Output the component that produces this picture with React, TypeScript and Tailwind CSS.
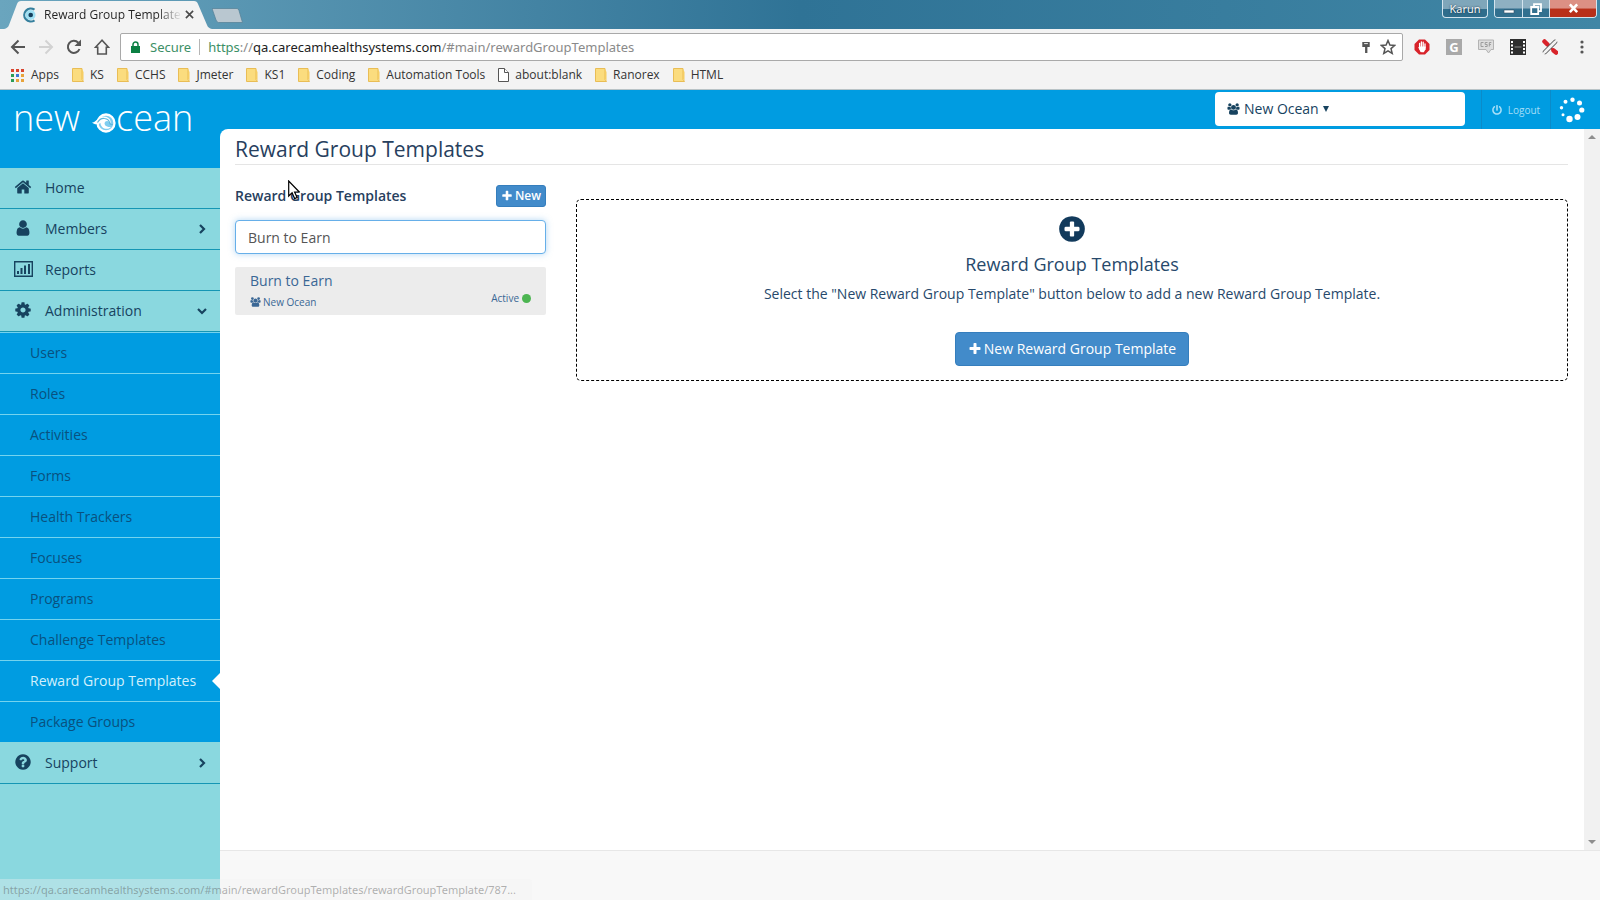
import React from 'react';
import { FaPowerOff } from 'react-icons/fa';

const FA = {
  home: 'M1472 992v480q0 26-19 45t-45 19h-384v-384h-256v384h-384q-26 0-45-19t-19-45v-480q0-1 .5-3t.5-3l575-474 575 474q1 2 1 6zm223-69l-62 74q-8 9-21 11h-3q-13 0-21-7l-692-577-692 577q-12 8-24 7-13-2-21-11l-62-74q-8-10-7-23.5t11-21.5l719-599q32-26 76-26t76 26l244 204v-195q0-14 9-23t23-9h192q14 0 23 9t9 23v408l219 182q10 8 11 21.5t-7 23.5z',
  user: 'M1536 1399q0 109-62.5 187t-150.5 78h-854q-88 0-150.5-78t-62.5-187q0-85 8.5-160.5t31.5-152 58.5-131 94-89 134.5-34.5q131 128 313 128t313-128q76 0 134.5 34.5t94 89 58.5 131 31.5 152 8.5 160.5zm-256-887q0 159-112.5 271.5t-271.5 112.5-271.5-112.5-112.5-271.5 112.5-271.5 271.5-112.5 271.5 112.5 112.5 271.5z',
  cog: 'M1152 896q0-106-75-181t-181-75-181 75-75 181 75 181 181 75 181-75 75-181zm512-109v222q0 12-8 23t-20 13l-185 28q-19 54-39 91 35 50 107 138 10 12 10 25t-9 23q-27 37-99 108t-94 71q-12 0-26-9l-138-108q-44 23-91 38-16 136-29 186-7 28-36 28h-222q-14 0-24.5-8.5t-11.5-21.5l-28-184q-49-16-90-37l-141 107q-10 9-25 9-14 0-25-11-126-114-165-168-7-10-7-23 0-12 8-23 15-21 51-66.5t54-70.5q-27-50-41-99l-183-27q-13-2-21-12.5t-8-23.5v-222q0-12 8-23t19-13l186-28q14-46 39-92-40-57-107-138-10-12-10-24 0-10 9-23 26-36 98.5-107.5t94.5-71.5q13 0 26 10l138 107q44-23 91-38 16-136 29-186 7-28 36-28h222q14 0 24.5 8.5t11.5 21.5l28 184q49 16 90 37l142-107q9-9 24-9 13 0 25 10 129 119 165 170 7 8 7 22 0 12-8 23-15 21-51 66.5t-54 70.5q26 50 41 98l183 28q13 2 21 12.5t8 23.5z',
  question: 'M1024 1376v-192q0-14-9-23t-23-9h-192q-14 0-23 9t-9 23v192q0 14 9 23t23 9h192q14 0 23-9t9-23zm256-672q0-88-55.5-163t-138.5-116-170-41q-243 0-371 213-15 24 8 42l132 100q7 6 19 6 16 0 25-12 53-68 86-92 34-24 86-24 48 0 85.5 26t37.5 59q0 38-20 61t-68 45q-63 28-115.5 86.5t-52.5 125.5v36q0 14 9 23t23 9h192q14 0 23-9t9-23q0-19 21.5-49.5t54.5-49.5q32-18 49-28.5t46-35 44.5-48 28-60.5 12.5-81zm384 192q0 209-103 385.5t-279.5 279.5-385.5 103-385.5-103-279.5-279.5-103-385.5 103-385.5 279.5-279.5 385.5-103 385.5 103 279.5 279.5 103 385.5z',
  plus: 'M1600 736v192q0 40-28 68t-68 28h-416v416q0 40-28 68t-68 28h-192q-40 0-68-28t-28-68v-416h-416q-40 0-68-28t-28-68v-192q0-40 28-68t68-28h416v-416q0-40 28-68t68-28h192q40 0 68 28t28 68v416h416q40 0 68 28t28 68z',
  plusCircle: 'M1344 960v-128q0-26-19-45t-45-19h-256v-256q0-26-19-45t-45-19h-128q-26 0-45 19t-19 45v256h-256q-26 0-45 19t-19 45v128q0 26 19 45t45 19h256v256q0 26 19 45t45 19h128q26 0 45-19t19-45v-256h256q26 0 45-19t19-45zm320-64q0 209-103 385.5t-279.5 279.5-385.5 103-385.5-103-279.5-279.5-103-385.5 103-385.5 279.5-279.5 385.5-103 385.5 103 279.5 279.5 103 385.5z',
  users: 'M657 896q-162 5-265 128h-134q-82 0-138-40.5t-56-118.5q0-353 124-353 6 0 43.5 21t97.5 42.5 119 21.5q67 0 133-23-5 37-5 66 0 139 81 256zm1071 637q0 120-73 189.5t-194 69.5h-874q-121 0-194-69.5t-73-189.5q0-53 3.5-103.5t14-109 26.5-108.5 43-97.5 62-81 85.5-53.5 111.5-20q10 0 43 21.5t73 48 107 48 135 21.5 135-21.5 107-48 73-48 43-21.5q61 0 111.5 20t85.5 53.5 62 81 43 97.5 26.5 108.5 14 109 3.5 103.5zm-1024-1277q0 106-75 181t-181 75-181-75-75-181 75-181 181-75 181 75 75 181zm704 384q0 159-112.5 271.5t-271.5 112.5-271.5-112.5-112.5-271.5 112.5-271.5 271.5-112.5 271.5 112.5 112.5 271.5zm576 225q0 78-56 118.5t-138 40.5h-134q-103-123-265-128 81-117 81-256 0-29-5-66 66 23 133 23 59 0 119-21.5t97.5-42.5 43.5-21q124 0 124 353zm-128-609q0 106-75 181t-181 75-181-75-75-181 75-181 181-75 181 75 75 181z',
};

function Glyph({ name, className }: { name: keyof typeof FA; className: string }) {
  return (
    <svg viewBox={name === 'users' ? '0 0 2048 1792' : '0 0 1792 1792'} className={className} fill="currentColor" aria-hidden="true">
      <path d={FA[name]} />
    </svg>
  );
}

function TitleBar() {
  return (
    <div className="flex h-[29px] items-start justify-between bg-linear-to-r from-[#6aa5be] via-[#2f7396] to-[#4086a5]">
      <div className="flex h-full items-start">
        <div className="relative flex h-full w-[212px] items-center">
          <svg viewBox="0 0 212 29" className="absolute inset-0 h-full w-full" aria-hidden="true">
            <path d="M4 29 Q8 28 9 25 L17 4 Q18 1 21 1 H194 Q197 1 198 4 L207 25 Q208 28 212 29 Z" fill="#f3f3f3" />
          </svg>
          <div className="relative flex w-full items-center pl-[22px]">
            <svg viewBox="0 0 16 16" className="size-4 shrink-0" aria-hidden="true">
              <circle cx="8.500" cy="8" r="5" fill="#9fe0f3" />
              <path d="M12.500 2.700 A6.500 6.500 0 1 0 12.500 13.300" fill="none" stroke="#347f9d" strokeWidth="2.2" />
              <circle cx="8.700" cy="8" r="2.300" fill="#153f5c" />
            </svg>
            <span className="ml-[6px] bg-linear-to-r from-[#222] from-80% to-transparent to-97% bg-clip-text text-[12px] leading-4 whitespace-nowrap text-transparent">
              Reward Group Templates
            </span>
            <button aria-label="Close tab" className="absolute left-[185px]">
              <svg viewBox="0 0 10 10" className="size-[9px]" stroke="#4a4a4a" strokeWidth="1.8" aria-hidden="true">
                <path d="M1 1l8 8M9 1L1 9" />
              </svg>
            </button>
          </div>
        </div>
        <button aria-label="New tab" className="mt-2">
          <svg viewBox="0 0 32 15" className="h-[15px] w-8" aria-hidden="true">
            <path d="M0 0.500 H25 Q26.500 0.500 27 2.500 L30.500 14.500 H6.500 Q5 14.500 4 12 Z" fill="#b9c7d0" stroke="#58849b" strokeWidth="0.8" />
          </svg>
        </button>
      </div>
      <div className="flex items-start gap-[6px] pr-[3px]">
        <button className="h-[18px] w-[46px] rounded-b-[4px] border border-t-0 border-[#d3e4ee] bg-linear-to-b from-[#7fa6ba] from-50% to-[#2f6d8c] to-55% text-[11px] leading-4 text-white [text-shadow:0_0_2px_#123]">
          Karun
        </button>
        <div className="flex h-[18px] overflow-hidden rounded-b-[4px] border border-t-0 border-[#d3e4ee]">
          <button aria-label="Minimize" className="flex w-7 items-center justify-center border-r border-[#d3e4ee] bg-linear-to-b from-[#8eb0c2] from-45% to-[#32708f] to-55%">
            <svg viewBox="0 0 12 12" className="size-3" aria-hidden="true"><path d="M1 7h10v3H1z" fill="#fff" stroke="#33506a" strokeWidth="0.6" /></svg>
          </button>
          <button aria-label="Restore" className="flex w-[27px] items-center justify-center border-r border-[#d3e4ee] bg-linear-to-b from-[#8eb0c2] from-45% to-[#32708f] to-55%">
            <svg viewBox="0 0 12 12" className="size-3" fill="none" stroke="#fff" strokeWidth="1.8" aria-hidden="true"><path d="M4 3.500V1.200h7v7H9" /><path d="M1.200 4h7v7h-7z" /></svg>
          </button>
          <button aria-label="Close" className="flex w-[46px] items-center justify-center bg-linear-to-b from-[#dc9084] from-45% to-[#b8301a] to-55%">
            <svg viewBox="0 0 12 12" className="size-[11px]" stroke="#fff" strokeWidth="2.8" aria-hidden="true"><path d="M2 1.500l8 8.500M10 1.500L2 10" /></svg>
          </button>
        </div>
      </div>
    </div>
  );
}

function Extensions() {
  return (
    <div className="flex items-center gap-4">
      <button aria-label="Ad blocker">
        <svg viewBox="0 0 16 16" className="size-4" aria-hidden="true">
          <path d="M5 .5h6L15.500 5v6L11 15.500H5L.5 11V5z" fill="#d8232a" />
          <path d="M5.600 8.500V4.500M7.400 8V2.800M9.200 8V3.200M5 8.500l2 4M11 9V5" stroke="#fff" strokeWidth="1.300" strokeLinecap="round" />
          <path d="M5 7.500h6.600v2.700L9.800 13.300H7.400L5 9.500z" fill="#fff" />
        </svg>
      </button>
      <button aria-label="Grammar" className="size-4 bg-[#a9a9a9] text-[13px] leading-4 font-bold text-white">G</button>
      <button aria-label="Feedback">
        <svg viewBox="0 0 16 16" className="size-4" aria-hidden="true">
          <path d="M.5 1h15v9.500h-2.500L10.500 14 8 10.500H.5z" fill="#dedede" stroke="#b3b3b3" />
          <path d="M5.500 3.500H3v4h2.500M9.500 3.500H7.200v2h2v2H7M13.300 3.500h-2v4M11.300 5.500h1.600" stroke="#9c9c9c" fill="none" />
        </svg>
      </button>
      <button aria-label="Video">
        <svg viewBox="0 0 16 16" className="size-4" aria-hidden="true">
          <path d="M0 0h16v16H0z" fill="#2e2e2e" />
          <path d="M1 2h2v2H1zM1 5.500h2v2H1zM1 9h2v2H1zM1 12.500h2v2H1zM13 2h2v2h-2zM13 5.500h2v2h-2zM13 9h2v2h-2zM13 12.500h2v2h-2z" fill="#fff" />
          <path d="M4.500 8h7" stroke="#8a8a8a" />
        </svg>
      </button>
      <button aria-label="Tools">
        <svg viewBox="0 0 16 16" className="size-4" fill="none" strokeLinecap="round" aria-hidden="true">
          <path d="M2.500 2.500l3 3M11.500 11.500l2.500 2" stroke="#d8232a" strokeWidth="4.500" />
          <path d="M6 6l4 4" stroke="#d8232a" strokeWidth="2" />
          <path d="M3 13L13 3" stroke="#555" strokeWidth="4.500" />
          <path d="M3 13L13 3" stroke="#f3f3f3" strokeWidth="2.800" />
          <path d="M15.500 .5l-2 2M.5 15.500l2-2" stroke="#f3f3f3" strokeWidth="2" />
        </svg>
      </button>
      <button aria-label="Menu" className="flex w-4 justify-center">
        <svg viewBox="0 0 4 14" className="h-[14px] w-1" fill="#555" aria-hidden="true"><circle cx="2" cy="2" r="1.600" /><circle cx="2" cy="7" r="1.600" /><circle cx="2" cy="12" r="1.600" /></svg>
      </button>
    </div>
  );
}

function Toolbar() {
  return (
    <div className="flex h-8 items-center bg-[#f3f3f3] px-[10px] pt-1">
      <div className="flex w-[110px] items-center gap-3">
        <button aria-label="Back"><svg viewBox="0 0 16 16" className="size-4" fill="none" stroke="#555" strokeWidth="2" aria-hidden="true"><path d="M15 8H2.500M8.500 1.500L2 8l6.500 6.500" /></svg></button>
        <button aria-label="Forward"><svg viewBox="0 0 16 16" className="size-4" fill="none" stroke="#d2d2d2" strokeWidth="2" aria-hidden="true"><path d="M1 8h12.500M7.500 1.500L14 8l-6.500 6.500" /></svg></button>
        <button aria-label="Reload"><svg viewBox="0 0 16 16" className="size-4" fill="none" stroke="#555" strokeWidth="2" aria-hidden="true"><path d="M13.500 10A6 6 0 1 1 12.300 3.800" /><path d="M15 .5v6.500H8.500z" fill="#555" stroke="none" /></svg></button>
        <button aria-label="Home"><svg viewBox="0 0 16 16" className="size-4" fill="none" stroke="#555" strokeWidth="1.600" aria-hidden="true"><path d="M8 1.200L1.500 8.200H3.700V15h8.600V8.200h2.200z" /></svg></button>
      </div>
      <div className="flex h-7 flex-1 items-center rounded-[2px] border border-[#a9a9a9] bg-white pr-[6px] pl-[10px]">
        <svg viewBox="0 0 9 12" className="h-3 w-[9px]" aria-hidden="true"><path d="M2 5.500V3.500a2.500 2.500 0 0 1 5 0v2" fill="none" stroke="#0b8043" strokeWidth="1.500" /><path d="M0 5h9v7H0z" fill="#0b8043" /></svg>
        <span className="ml-[10px] text-[13px] leading-5 text-[#3c8f66]">Secure</span>
        <span className="mx-2 h-4 w-px bg-[#b5b5b5]" />
        <span className="flex-1 text-[13px] leading-5 whitespace-nowrap text-[#8a8a8a]">
          <span className="text-[#3c8f66]">https</span>://<span className="text-[#222]">qa.carecamhealthsystems.com</span>/#main/rewardGroupTemplates
        </span>
        <button aria-label="Saved password" className="mr-[9px]">
          <svg viewBox="0 0 10 14" className="h-[13px] w-[10px]" aria-hidden="true"><path d="M1 1h8v5.500H6.500V13h-2.500V6.500H1z" fill="#555" /><path d="M3 2.800h4" stroke="#fff" /></svg>
        </button>
        <button aria-label="Bookmark this page">
          <svg viewBox="0 0 16 16" className="size-4" fill="none" stroke="#555" strokeWidth="1.500" aria-hidden="true"><path d="M8 1.500l1.900 4.500 4.800.4-3.700 3.200 1.200 4.800L8 11.800l-4.200 2.600L5 9.600 1.300 6.400 6.100 6z" /></svg>
        </button>
      </div>
      <div className="pl-[11px]"><Extensions /></div>
    </div>
  );
}

const bookmarks = ['KS', 'CCHS', 'Jmeter', 'KS1', 'Coding', 'Automation Tools', 'about:blank', 'Ranorex', 'HTML'];
const appDots = ['#d9452f', '#d9452f', '#d9452f', '#2a9d57', '#3b78d8', '#e8a33a', '#2a9d57', '#e8a33a', '#e8a33a'];

function Bookmarks() {
  return (
    <nav aria-label="Bookmarks" className="flex h-[29px] items-center gap-[13px] border-b border-[#b9c3c6] bg-[#f3f3f3] pl-[11px] font-['Open_Sans',sans-serif] text-[12px] leading-4 text-[#333]">
      <a href="#apps" className="flex items-center gap-[7px]">
        <svg viewBox="0 0 13 13" className="size-[13px]" aria-hidden="true">
          {appDots.map((c, i) => <rect key={i} x={(i % 3) * 5} y={Math.floor(i / 3) * 5} width="3" height="3" fill={c} />)}
        </svg>
        Apps
      </a>
      {bookmarks.map((b) => (
        <a key={b} href="#bookmark" className="flex items-center gap-[6px] whitespace-nowrap">
          {b === 'about:blank' ? (
            <svg viewBox="0 0 11 14" className="h-[14px] w-[11px]" fill="#fff" stroke="#555" aria-hidden="true"><path d="M.5.5h6l4 4v9H.5z" /><path d="M6.500.5v4h4" /></svg>
          ) : (
            <svg viewBox="0 0 12 14" className="h-[14px] w-3" aria-hidden="true"><path d="M.5.5h9.500v11l1.500 2H.5z" fill="#fbdc7e" stroke="#e9bd55" /><path d="M10 1v10l1.500 2V4z" fill="#f6cd62" /></svg>
          )}
          {b}
        </a>
      ))}
    </nav>
  );
}

function Logo() {
  return (
    <a href="#main" className="flex h-[78px] items-start bg-[#009ce1] pt-[8px] pl-[13px] text-[36px] leading-10 font-light text-white">
      <span>new</span>
      <svg viewBox="0 0 24 22" className="mt-[14px] ml-3 h-[22px] w-6" aria-hidden="true">
        <circle cx="14" cy="11" r="8.500" fill="#7fcdf0" stroke="#fff" strokeWidth="2.300" />
        <path d="M0 10.500c4 .5 5.500-6 11.500-6 4.500 0 8 3 7 7-1-2.500-4-3.500-5.500-1.500-1.500 2.500 1 5.500 6 5-4 4-10.500 1-10.500-4-2.500 1.500-6 2-8.500-.5z" fill="#fff" />
        <path d="M5.500 10.500c1.500-2.500 4-4.500 7-4 3 .4 4.800 2.300 5.200 4.500.4 1.500 1.800 2 3.300 1.200" fill="none" stroke="#5fb9dd" strokeWidth="1.200" />
      </svg>
      <span>cean</span>
    </a>
  );
}

const adminItems = ['Users', 'Roles', 'Activities', 'Forms', 'Health Trackers', 'Focuses', 'Programs', 'Challenge Templates', 'Reward Group Templates', 'Package Groups'];

function Chevron({ down }: { down?: boolean }) {
  return (
    <svg viewBox="0 0 10 10" className="size-[10px]" fill="none" stroke="currentColor" strokeWidth="2.200" aria-hidden="true">
      <path d={down ? 'M1 3l4 4 4-4' : 'M3 1l4 4-4 4'} />
    </svg>
  );
}

function NavItem({ label, icon, arrow }: { label: string; icon: React.ReactNode; arrow?: 'right' | 'down' }) {
  return (
    <a href="#nav" className="flex h-[41px] items-center border-b border-[#1596b4] pr-[13px] pl-[13px] text-[#17435f]">
      <span className="flex w-5 justify-center pb-[2px]">{icon}</span>
      <span className="ml-3 flex-1">{label}</span>
      {arrow && <Chevron down={arrow === 'down'} />}
    </a>
  );
}

function Sidebar() {
  return (
    <aside className="w-[220px] shrink-0 bg-[#8ad8df] text-[14px] leading-5">
      <Logo />
      <nav aria-label="Main">
        <NavItem label="Home" icon={<Glyph name="home" className="size-[18px]" />} />
        <NavItem label="Members" arrow="right" icon={<Glyph name="user" className="size-[18px]" />} />
        <NavItem
          label="Reports"
          icon={
            <svg viewBox="0 0 19 16" className="h-4 w-[19px]" aria-hidden="true">
              <path d="M.7.7h17.600v14.600H.7z" fill="none" stroke="currentColor" strokeWidth="1.400" />
              <path d="M3 10h2v3H3zM6.500 7h2v6h-2zM10 4.500h2V13h-2zM14 3h2v10h-2z" fill="currentColor" />
            </svg>
          }
        />
        <NavItem label="Administration" arrow="down" icon={<Glyph name="cog" className="size-[18px]" />} />
        <ul className="border-t border-[#74d3ee] bg-[#009ce1]">
          {adminItems.map((item) => (
            <li key={item} className="h-[41px] border-b border-[#74d3ee] last:border-[#8ad8df]">
              <a
                href="#item"
                aria-current={item === 'Reward Group Templates' ? 'page' : undefined}
                className="relative flex h-full items-center pl-[30px] text-[#09517f] aria-[current=page]:text-[#d2f0fc]"
              >
                {item}
                {item === 'Reward Group Templates' && (
                  <svg viewBox="0 0 8 16" className="absolute right-0 h-4 w-2" aria-hidden="true"><path d="M8 0v16L0 8z" fill="#fff" /></svg>
                )}
              </a>
            </li>
          ))}
        </ul>
        <NavItem label="Support" arrow="right" icon={<Glyph name="question" className="size-[18px]" />} />
      </nav>
    </aside>
  );
}

function Header() {
  return (
    <header className="flex h-[39px] items-stretch justify-end bg-[#009ce1]">
      <button className="mt-[2px] mb-[3px] flex w-[250px] items-center gap-1 rounded-[4px] bg-white pl-3 text-[14px] leading-5 text-[#17435f]">
        <Glyph name="users" className="h-3 w-[13px]" />
        <span>New Ocean</span>
        <svg viewBox="0 0 6 6" className="size-[6px]" aria-hidden="true"><path d="M0 0h6L3 6z" fill="#17435f" /></svg>
      </button>
      <button className="ml-4 flex w-[70px] items-center justify-center gap-[6px] border-x border-[#0b8bc9] text-[10px] leading-4 text-[#a5def7]">
        <FaPowerOff className="size-[10px]" aria-hidden="true" />
        Logout
      </button>
      <div className="flex w-[49px] items-center pl-[8px]">
        <svg viewBox="0 0 26 26" className="size-[26px]" fill="#fff" role="img" aria-label="Loading">
          <circle cx="13.500" cy="2.800" r="2.200" /><circle cx="20.500" cy="6" r="2.500" /><circle cx="22.800" cy="13" r="2.600" />
          <circle cx="18.500" cy="20" r="3" /><circle cx="10.500" cy="22" r="3.200" /><circle cx="4" cy="17.800" r="1.500" />
          <circle cx="2.500" cy="10.800" r="1.700" /><circle cx="6.500" cy="4.800" r="2" />
        </svg>
      </div>
    </header>
  );
}

function TemplateList() {
  return (
    <section className="relative w-[311px] shrink-0">
      <div className="flex h-[22px] items-center justify-between">
        <h2 className="text-[14px] leading-5 font-semibold text-[#27405e]">Reward Group Templates</h2>
        <button className="flex h-[22px] items-center gap-[2px] rounded-[3px] border border-[#357ebd] bg-[#428bca] px-1 text-[12px] leading-4 font-semibold text-white">
          <Glyph name="plus" className="size-3" />
          New
        </button>
      </div>
      <input
        aria-label="Search templates"
        defaultValue="Burn to Earn"
        className="mt-[13px] block h-[34px] w-full rounded-[4px] border border-[#66afe9] bg-white px-3 text-[14px] leading-5 text-[#555] shadow-[0_0_6px_rgba(102,175,233,0.5)] outline-none"
      />
      <a href="#template" className="mt-[13px] flex h-12 justify-between rounded-[2px] bg-[#ececec] px-[15px] text-[#3a6795]">
        <span>
          <span className="mt-1 block text-[14px] leading-5">Burn to Earn</span>
          <span className="mt-[3px] flex items-center gap-[2px] text-[10px] leading-4">
            <Glyph name="users" className="h-[10px] w-[11px]" />
            New Ocean
          </span>
        </span>
        <span className="mt-[23px] flex h-4 items-center gap-[3px] text-[10px] leading-4">
          Active
          <span className="size-[9px] rounded-full bg-[#4cb551]" />
        </span>
      </a>
      <svg viewBox="0 0 12 20" className="absolute -top-[5px] left-[53px] h-5 w-3" aria-hidden="true">
        <path d="M.7 1v15l3.400-3.200 2.500 5.800 2.500-1.100-2.500-5.500h4.700z" fill="#fff" stroke="#000" strokeWidth="1.200" />
      </svg>
    </section>
  );
}

function EmptyState() {
  return (
    <section className="mt-[14px] flex h-[182px] flex-1 flex-col items-center rounded-[5px] border border-dashed border-black text-[#27496b]">
      <Glyph name="plusCircle" className="mt-[14px] size-[30px] text-[#123a5c]" />
      <h2 className="mt-2 text-[18px] leading-6">Reward Group Templates</h2>
      <p className="mt-2 text-[14px] leading-5">Select the "New Reward Group Template" button below to add a new Reward Group Template.</p>
      <button className="mt-7 flex h-[34px] items-center gap-[2px] rounded-[4px] border border-[#357ebd] bg-[#428bca] px-3 text-[14px] leading-5 font-medium text-white">
        <Glyph name="plus" className="size-[14px]" />
        New Reward Group Template
      </button>
    </section>
  );
}

function ScrollBar() {
  return (
    <div className="flex w-4 shrink-0 flex-col items-center justify-between bg-[#f1f1f1] py-[6px]" aria-hidden="true">
      <svg viewBox="0 0 8 4" className="h-1 w-2"><path d="M0 4l4-4 4 4z" fill="#8d8d8d" /></svg>
      <svg viewBox="0 0 8 4" className="h-1 w-2"><path d="M0 0l4 4 4-4z" fill="#8d8d8d" /></svg>
    </div>
  );
}

export default function App() {
  return (
    <div className="flex min-h-screen flex-col font-['Open_Sans',sans-serif]">
      <TitleBar />
      <div className="font-['Noto_Sans',sans-serif]">
        <Toolbar />
        <Bookmarks />
      </div>
      <div className="relative flex flex-1">
        <Sidebar />
        <div className="flex min-w-0 flex-1 flex-col">
          <Header />
          <div className="flex flex-1 bg-[#009ce1]">
            <main className="flex-1 rounded-tl-[8px] bg-white pr-4 pl-[15px]">
              <h1 className="border-b border-[#e5e5e5] pt-[6px] pb-[1px] text-[21px] leading-7 text-[#27405e]">Reward Group Templates</h1>
              <div className="mt-5 flex items-start gap-[30px]">
                <TemplateList />
                <EmptyState />
              </div>
            </main>
            <ScrollBar />
          </div>
          <footer className="h-[50px] border-t border-[#e7e7e7] bg-[#f8f8f8]" />
        </div>
        <div className="absolute bottom-0 left-0 h-[21px] w-[532px] rounded-tr-[3px] bg-[#f3f3f3]/35 pt-[1px] pl-[3px] font-['Noto_Sans',sans-serif] text-[11px] leading-5 text-[#555]/45">
          https://qa.carecamhealthsystems.com/#main/rewardGroupTemplates/rewardGroupTemplate/787...
        </div>
      </div>
    </div>
  );
}
